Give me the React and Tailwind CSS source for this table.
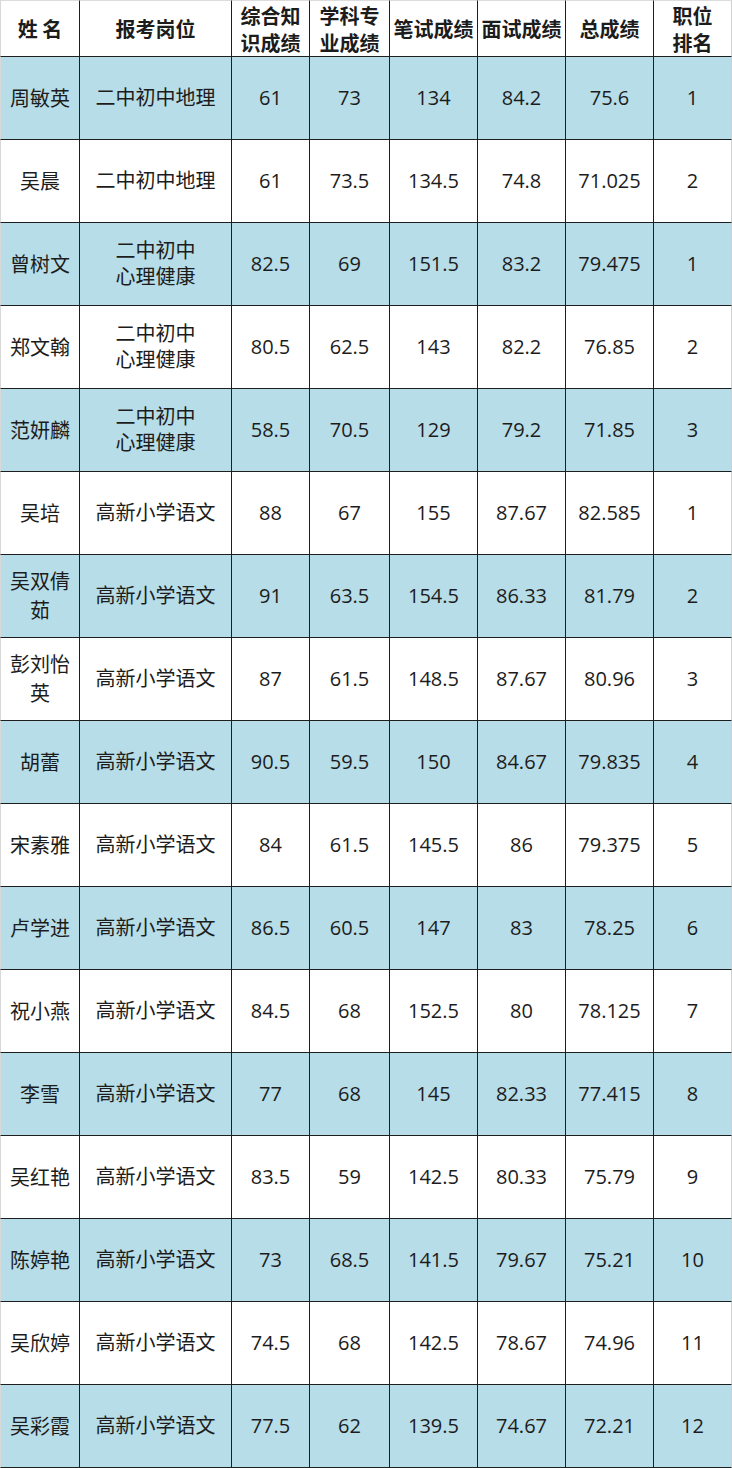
import React from "react";

// 成绩表 — 表头 + 17 行数据，奇数行浅蓝底
const headers = [
  ["姓 名"],
  ["报考岗位"],
  ["综合知", "识成绩"],
  ["学科专", "业成绩"],
  ["笔试成绩"],
  ["面试成绩"],
  ["总成绩"],
  ["职位", "排名"],
];

const rows = [
  [["周敏英"], ["二中初中地理"], "61", "73", "134", "84.2", "75.6", "1"],
  [["吴晨"], ["二中初中地理"], "61", "73.5", "134.5", "74.8", "71.025", "2"],
  [["曾树文"], ["二中初中", "心理健康"], "82.5", "69", "151.5", "83.2", "79.475", "1"],
  [["郑文翰"], ["二中初中", "心理健康"], "80.5", "62.5", "143", "82.2", "76.85", "2"],
  [["范妍麟"], ["二中初中", "心理健康"], "58.5", "70.5", "129", "79.2", "71.85", "3"],
  [["吴培"], ["高新小学语文"], "88", "67", "155", "87.67", "82.585", "1"],
  [["吴双倩", "茹"], ["高新小学语文"], "91", "63.5", "154.5", "86.33", "81.79", "2"],
  [["彭刘怡", "英"], ["高新小学语文"], "87", "61.5", "148.5", "87.67", "80.96", "3"],
  [["胡蕾"], ["高新小学语文"], "90.5", "59.5", "150", "84.67", "79.835", "4"],
  [["宋素雅"], ["高新小学语文"], "84", "61.5", "145.5", "86", "79.375", "5"],
  [["卢学进"], ["高新小学语文"], "86.5", "60.5", "147", "83", "78.25", "6"],
  [["祝小燕"], ["高新小学语文"], "84.5", "68", "152.5", "80", "78.125", "7"],
  [["李雪"], ["高新小学语文"], "77", "68", "145", "82.33", "77.415", "8"],
  [["吴红艳"], ["高新小学语文"], "83.5", "59", "142.5", "80.33", "75.79", "9"],
  [["陈婷艳"], ["高新小学语文"], "73", "68.5", "141.5", "79.67", "75.21", "10"],
  [["吴欣婷"], ["高新小学语文"], "74.5", "68", "142.5", "78.67", "74.96", "11"],
  [["吴彩霞"], ["高新小学语文"], "77.5", "62", "139.5", "74.67", "72.21", "12"],
];

const colClass = [
  "border-l border-l-[#d8d8d8]",
  "",
  "",
  "",
  "",
  "",
  "",
  "border-r-[#d0d0d0]",
];

function Lines({ lines, lh }) {
  return (
    <div className={lh}>
      {lines.map((l, i) => (
        <div key={i}>{l}</div>
      ))}
    </div>
  );
}

export default function App() {
  return (
    <div
      className="w-[732px] h-[1468px] bg-white text-[#1c1c1c] overflow-hidden"
      style={{ fontFamily: '"Open Sans", "Noto Sans CJK SC", sans-serif' }}
    >
      <div className="grid grid-cols-[80px_152px_78px_80px_88px_88px_88px_78px] grid-rows-[57px_repeat(17,83px)]">
        {headers.map((h, i) => (
          <div
            key={"h" + i}
            className={`flex items-center justify-center text-center font-bold text-[20px] border-t border-t-[#dcdcdc] border-r border-b border-[#1e1e1e] ${colClass[i]}`}
            style={{ fontFamily: '"Noto Sans CJK SC", sans-serif' }}
          >
            <Lines lines={h} lh="leading-[27px]" />
          </div>
        ))}
        {rows.map((r, ri) =>
          r.map((c, ci) => (
            <div
              key={ri + "-" + ci}
              className={`flex items-center justify-center text-center text-[20px] border-r border-b border-[#1e1e1e] ${colClass[ci]} ${
                ri % 2 === 0 ? "bg-[#b7dde8]" : "bg-white"
              }`}
            >
              {Array.isArray(c) ? (
                <Lines lines={c} lh={ci === 0 ? "leading-[29px]" : "leading-[26px]"} />
              ) : (
                c
              )}
            </div>
          ))
        )}
      </div>
    </div>
  );
}
